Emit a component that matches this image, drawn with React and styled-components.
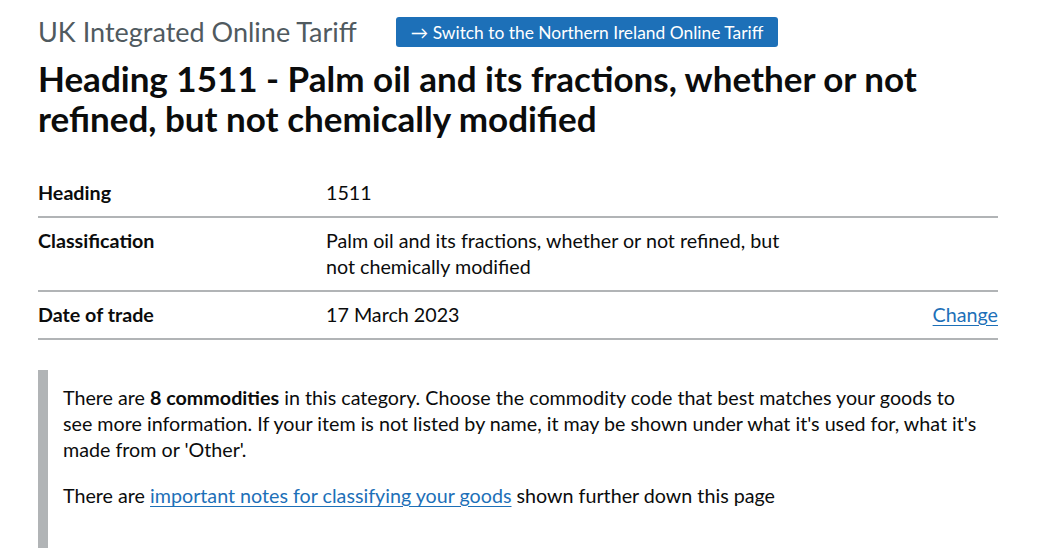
import styled, { createGlobalStyle } from "styled-components"

const GlobalStyle = createGlobalStyle`
  body {
    margin: 0;
    background: #ffffff;
    color: #0b0c0c;
    font-family: Lato, "Liberation Sans", Arial, sans-serif;
  }
`

const Page = styled.main`
  width: 960px;
  padding: 14px 0 0 38px;
`

const TopRow = styled.div`
  display: flex;
  align-items: center;
  gap: 39px;
`

const Caption = styled.span`
  font-size: 27px;
  line-height: 36px;
  color: #505a5f;
`

const SwitchButton = styled.a`
  display: inline-flex;
  align-items: center;
  height: 30px;
  padding: 0 15px;
  background: #1d70b8;
  color: #ffffff;
  border-radius: 3px;
  font-size: 17.4px;
  text-decoration: none;
`

const Title = styled.h1`
  margin: 8px 0 32px;
  font-size: 35px;
  line-height: 40px;
  font-weight: 700;
  max-width: 900px;
`

const SummaryList = styled.dl`
  margin: 0 0 30px;
  font-size: 19.7px;
  line-height: 26px;
`

const Row = styled.div`
  display: grid;
  grid-template-columns: 30% 50% 20%;
  border-bottom: 2px solid #b1b4b6;
`

const Key = styled.dt`
  padding: 10px 20px 10px 0;
  font-weight: 700;
`

const Value = styled.dd`
  margin: 0;
  padding: 10px 20px 10px 0;
`

const Actions = styled.dd`
  margin: 0;
  padding: 10px 0;
  text-align: right;
`

const Link = styled.a`
  color: #1d70b8;
  text-decoration: underline;
  text-underline-offset: 3px;
`

const Inset = styled.div`
  border-left: 10px solid #b1b4b6;
  padding: 15px 0 40px 15px;
  font-size: 19.7px;
  line-height: 26px;

  p {
    margin: 0 0 20px;
    max-width: 915px;
  }
`

const App = () => {
  return (
    <>
      <GlobalStyle />
      <Page>
        <TopRow>
          <Caption>UK Integrated Online Tariff</Caption>
          <SwitchButton href="#">→ Switch to the Northern Ireland Online Tariff</SwitchButton>
        </TopRow>
        <Title>Heading 1511 - Palm oil and its fractions, whether or not refined, but not chemically modified</Title>
        <SummaryList>
          <Row>
            <Key>Heading</Key>
            <Value>1511</Value>
            <Actions />
          </Row>
          <Row>
            <Key>Classification</Key>
            <Value>Palm oil and its fractions, whether or not refined, but not chemically modified</Value>
            <Actions />
          </Row>
          <Row>
            <Key>Date of trade</Key>
            <Value>17 March 2023</Value>
            <Actions><Link href="#">Change</Link></Actions>
          </Row>
        </SummaryList>
        <Inset>
          <p>
            There are <strong>8 commodities</strong> in this category. Choose the commodity code that best matches your goods to see more information. If your item is not listed by name, it may be shown under what it's used for, what it's made from or 'Other'.
          </p>
          <p>
            There are <Link href="#">important notes for classifying your goods</Link> shown further down this page
          </p>
        </Inset>
      </Page>
    </>
  )
}

export default App
